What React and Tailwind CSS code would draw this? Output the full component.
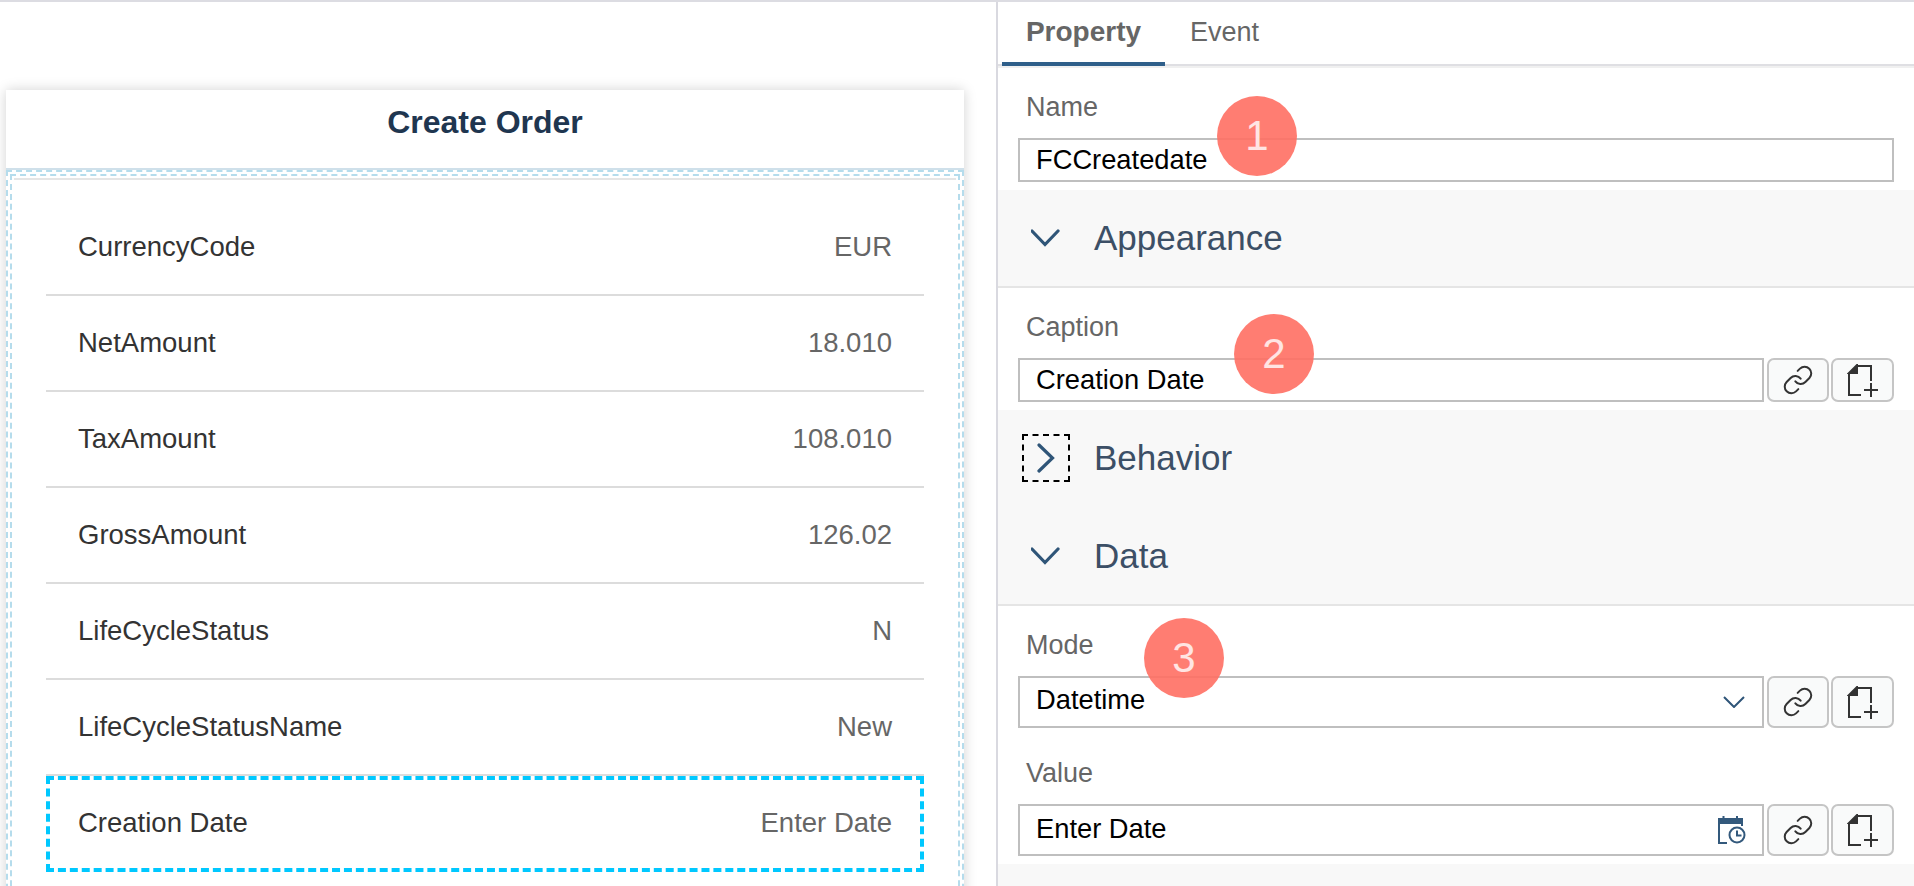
import React from 'react';
import { Link } from 'lucide-react';

const rows = [
  { label: 'CurrencyCode', value: 'EUR' },
  { label: 'NetAmount', value: '18.010' },
  { label: 'TaxAmount', value: '108.010' },
  { label: 'GrossAmount', value: '126.02' },
  { label: 'LifeCycleStatus', value: 'N' },
  { label: 'LifeCycleStatusName', value: 'New' },
];

function AddDocIcon() {
  return (
    <svg width="32" height="33" viewBox="0 0 32 33" fill="none" stroke="#333" strokeWidth="2">
      <path d="M10 2H24V17M2 9V31H14" />
      <path d="M2 9L10 1V9Z" fill="#333" />
      <path d="M24 19V33M17 26H31" />
    </svg>
  );
}

function DateTimeIcon() {
  return (
    <svg width="28" height="28" viewBox="0 0 28 28" fill="none" stroke="#33597c" strokeWidth="2">
      <path d="M1 3H24V7H1Z" fill="#33597c" />
      <path d="M5.5 0V3M19 0V3" />
      <path d="M1 7V27H9M24 7V10" />
      <circle cx="19" cy="19" r="7.5" />
      <path d="M19 14.5V19.5H23.5" />
    </svg>
  );
}

function ChevronDown() {
  return (
    <svg width="30" height="18" viewBox="0 0 30 18" fill="none" stroke="#2f5578" strokeWidth="3.2" strokeLinecap="round">
      <path d="M1 2L14 15.5L27 2" />
    </svg>
  );
}

function ChevronRight() {
  return (
    <svg width="18" height="30" viewBox="0 0 18 30" fill="none" stroke="#2f5578" strokeWidth="3.2" strokeLinecap="round">
      <path d="M2 2L15.5 15L2 28" />
    </svg>
  );
}

function Badge({ n, className }) {
  return (
    <div className={`absolute w-[80px] h-[80px] rounded-full bg-[#ff6f63]/90 flex items-center justify-center text-[42px] text-white/80 leading-none ${className}`}>
      {n}
    </div>
  );
}

function SideButtons() {
  return (
    <div className="flex gap-[2px] ml-[3px] h-full">
      <div className="w-[62px] h-full border-2 border-[#c5c5c5] rounded-[7px] bg-[#f9fafa] flex items-center justify-center">
        <Link size={32} strokeWidth={1.5} color="#333" />
      </div>
      <div className="w-[63px] h-full border-2 border-[#c5c5c5] rounded-[7px] bg-[#f9fafa] flex items-center justify-center">
        <AddDocIcon />
      </div>
    </div>
  );
}

function Field({ label, value, height, labelHeight, labelTop = 9, textBottom = 0, icon, buttons = true }) {
  return (
    <div>
      <div className="pl-[28px] flex items-center text-[27px] text-[#666]" style={{ height: labelHeight, paddingTop: labelTop }}>{label}</div>
      <div className="flex pl-[20px] pr-[20px]" style={{ height }}>
        <div className="flex-1 border-2 border-[#bfbfbf] bg-white flex items-center justify-between pl-[16px] pr-[16px] text-[27.3px] text-black">
          <span style={{ paddingBottom: textBottom }}>{value}</span>
          {icon}
        </div>
        {buttons && <SideButtons />}
      </div>
    </div>
  );
}

function Section({ title, open, focused, height, border }) {
  return (
    <div
      className={`bg-[#f8f8f8] flex items-center ${border ? 'border-b-2 border-[#e5e5e5]' : ''} ${focused ? 'pb-[2px]' : ''}`}
      style={{ height }}
    >
      <div className="w-[96px] flex justify-center shrink-0">
        <div className={`w-[48px] h-[48px] flex items-center justify-center ${focused ? 'border-2 border-dashed border-black' : ''}`}>
          {open ? <ChevronDown /> : <ChevronRight />}
        </div>
      </div>
      <span className="text-[35px] text-[#3c4f66]">{title}</span>
    </div>
  );
}

export default function App() {
  return (
    <div className="relative h-[886px] overflow-hidden bg-white border-t-2 border-[#dcdce2] flex font-['Liberation_Sans',Arial,sans-serif]">
      {/* Canvas */}
      <div className="w-[998px] shrink-0 border-r-2 border-[#d9d9e0] pt-[88px] pl-[6px] pr-[32px]">
        <div className="shadow-[0_0_12px_rgba(0,0,0,0.18)] bg-white">
          <div className="h-[78px] pb-[14px] flex items-center justify-center font-bold text-[32px] text-[#1f3650]">
            Create Order
          </div>
          <div className="border-t-2 border-[#cfe0ea]">
            <div className="border-2 border-dashed border-[#b5dcec] p-[2px]">
              <div className="border-2 border-dashed border-[#b5dcec] p-[2px]">
                <div className="border-t-2 border-[#e5e5e5] pt-[20px] px-[32px] pb-[40px]">
                  {rows.map((row) => (
                    <div
                      key={row.label}
                      className="h-[96px] border-b-2 border-[#dcdcdc] flex items-center justify-between pl-[32px] pr-[32px] text-[27.5px]"
                    >
                      <span className="text-[#333]">{row.label}</span>
                      <span className="text-[#666]">{row.value}</span>
                    </div>
                  ))}
                  <div className="h-[96px] pb-[2px] border-4 border-dashed border-[#00c8ff] flex items-center justify-between pl-[28px] pr-[28px] text-[27.5px]">
                    <span className="text-[#333]">Creation Date</span>
                    <span className="text-[#666]">Enter Date</span>
                  </div>
                </div>
              </div>
            </div>
          </div>
        </div>
      </div>

      {/* Property panel */}
      <div className="flex-1 min-w-0">
        <div className="h-[64px] border-b-2 border-[#dfdfe3] shadow-[0_2px_0_#f0f0f0] flex pl-[4px]">
          <div className="w-[163px] h-[64px] border-b-4 border-[#2f5f8a] flex items-center justify-center font-bold text-[28px] text-[#666]">
            Property
          </div>
          <div className="h-[60px] flex items-center ml-[25px] text-[27px] text-[#666]">Event</div>
        </div>

        <Field label="Name" value="FCCreatedate" labelHeight={72} labelTop={11} height={44} buttons={false} />
        <div className="h-[8px]" />
        <Section title="Appearance" open height={98} border />
        <Field label="Caption" value="Creation Date" labelHeight={70} height={44} />
        <div className="h-[8px]" />
        <Section title="Behavior" focused height={98} />
        <Section title="Data" open height={98} border />
        <Field
          label="Mode"
          value="Datetime"
          labelHeight={70}
          height={52}
          textBottom={4}
          icon={
            <svg width="22" height="12" viewBox="0 0 22 12" fill="none" stroke="#2f5578" strokeWidth="2" className="mr-[1px]">
              <path d="M1 1L11 11L21 1" />
            </svg>
          }
        />
        <Field label="Value" value="Enter Date" labelHeight={76} labelTop={14} height={52} textBottom={2} icon={<DateTimeIcon />} />
        <div className="h-[8px]" />
        <div className="h-[30px] bg-[#f8f8f8]" />
      </div>

      {/* Callouts */}
      <Badge n="1" className="left-[1217px] top-[94px]" />
      <Badge n="2" className="left-[1234px] top-[312px]" />
      <Badge n="3" className="left-[1144px] top-[616px]" />
    </div>
  );
}
